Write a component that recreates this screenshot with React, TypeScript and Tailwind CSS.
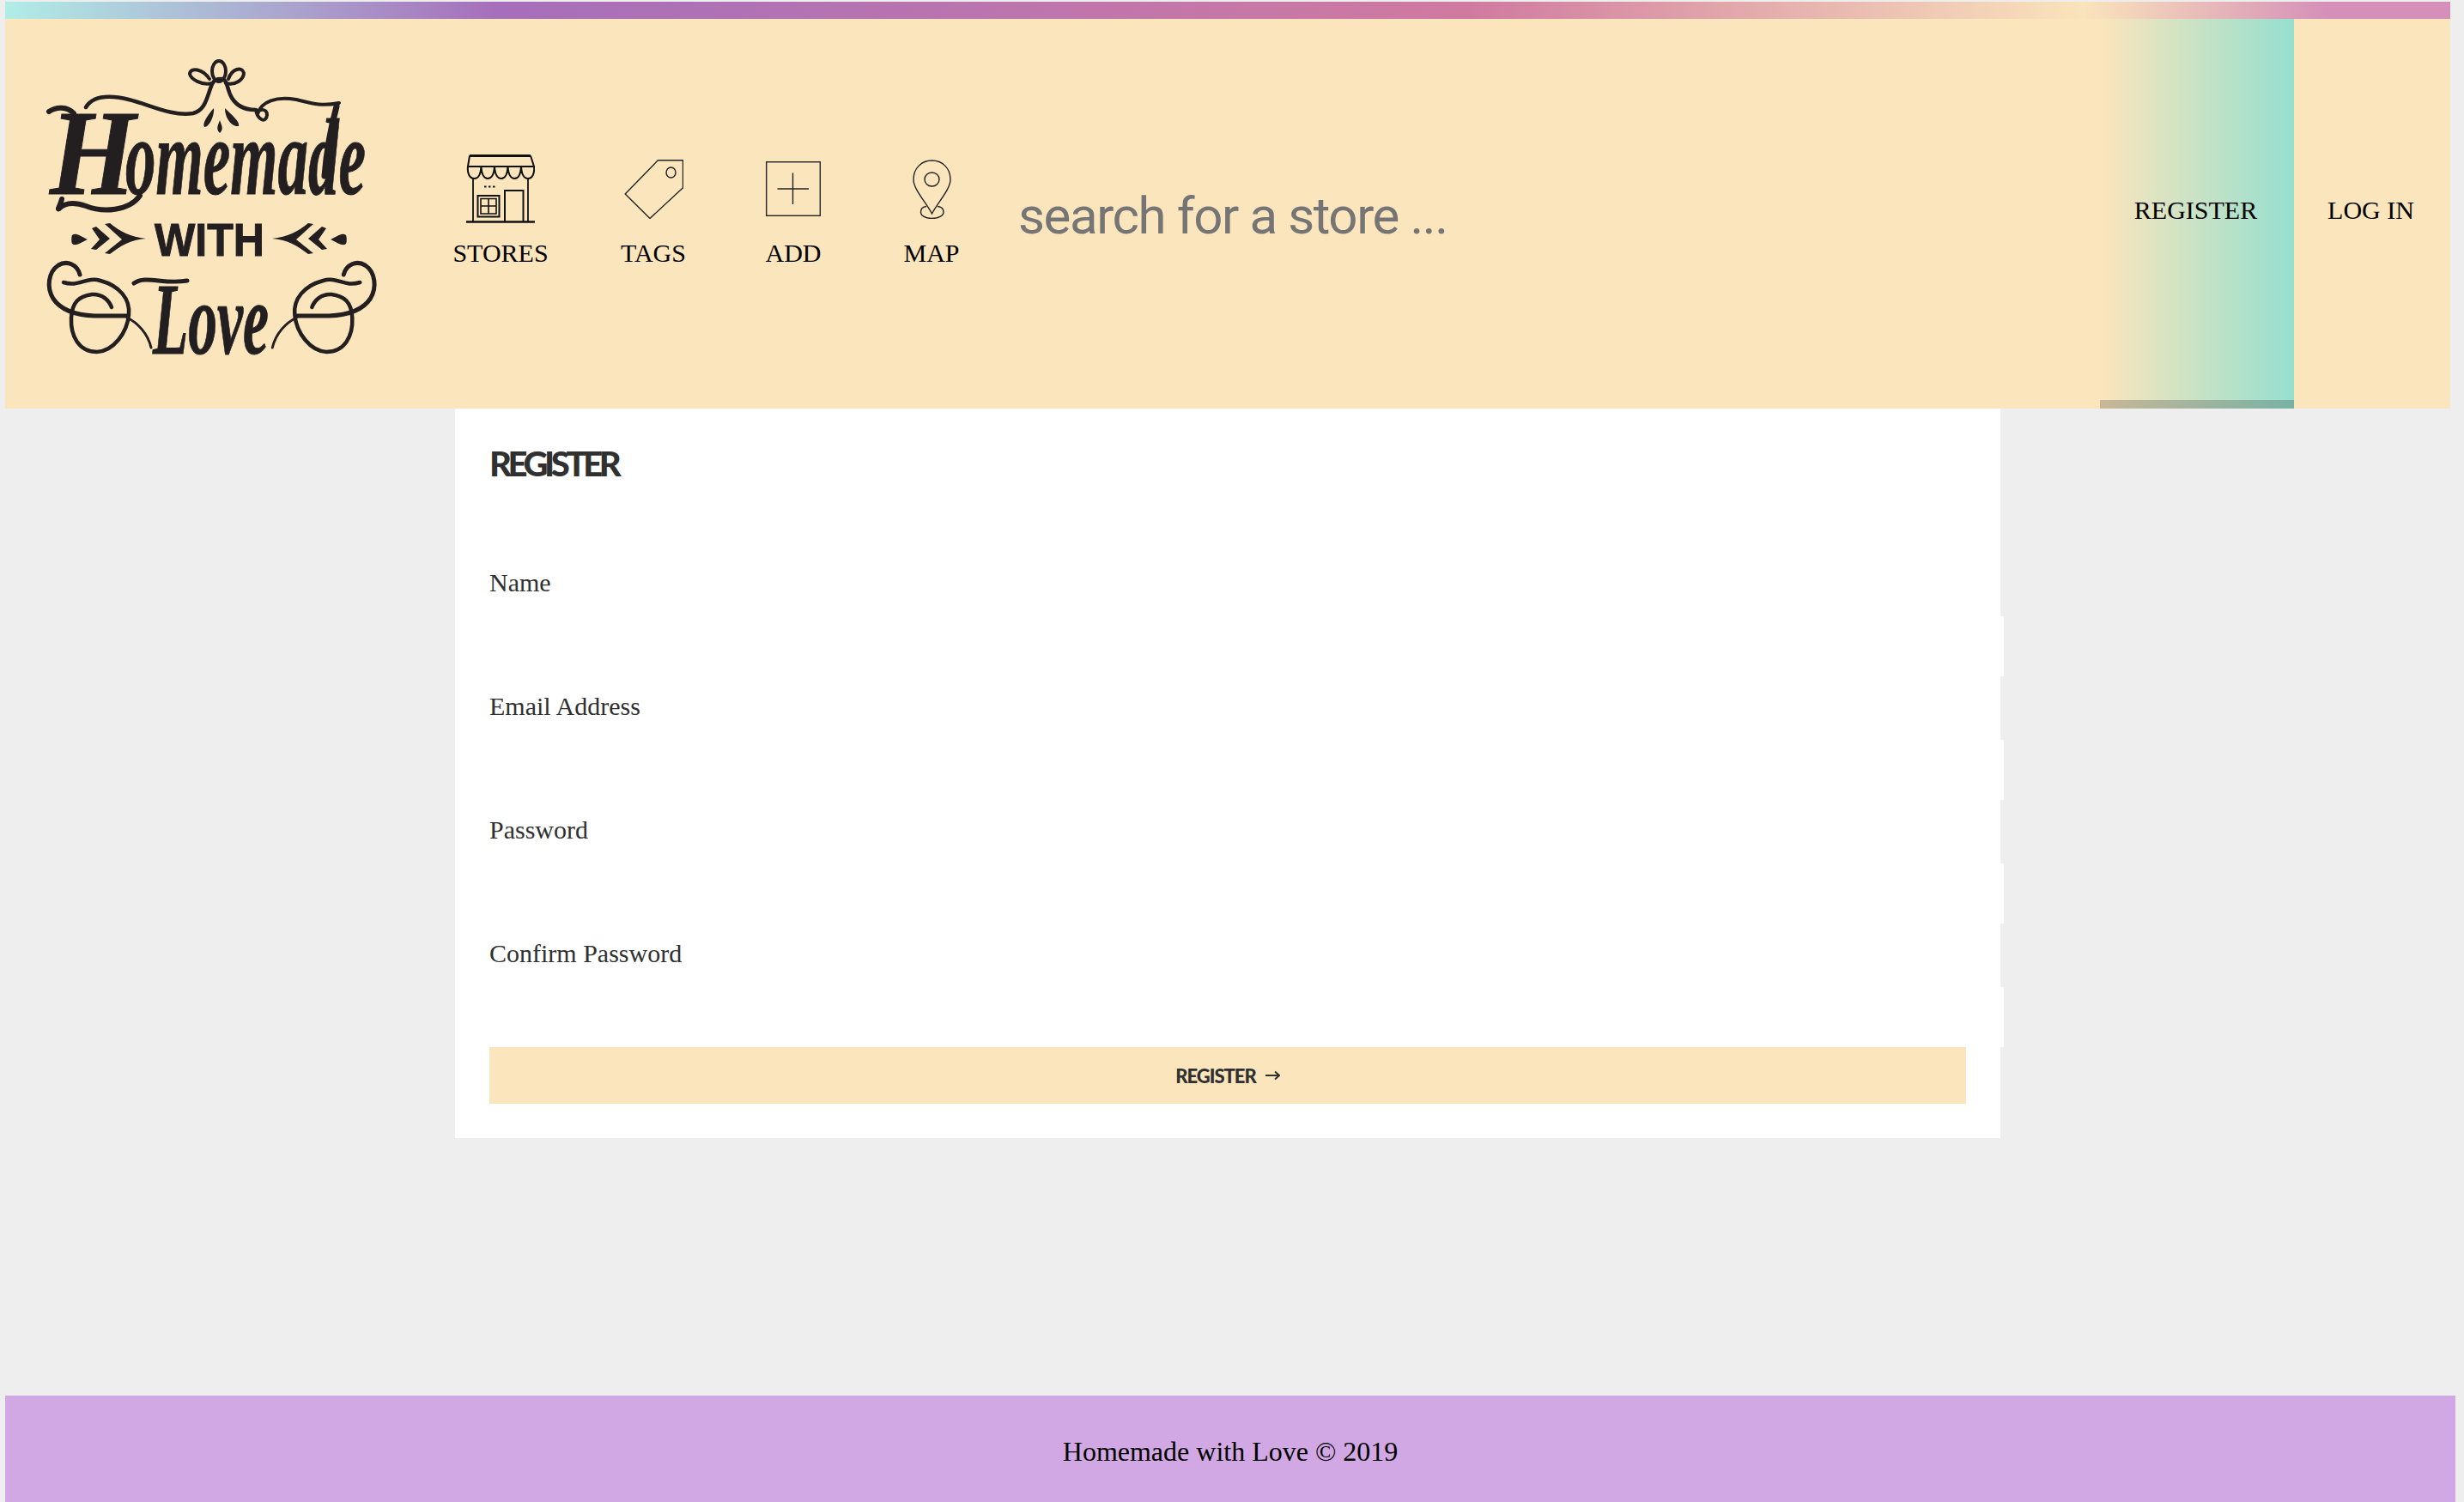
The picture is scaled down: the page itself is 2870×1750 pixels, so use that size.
const ink = '#231f20';

const Ornament = () => (
  <g fill="none" stroke={ink} strokeLinecap="round">
    <path strokeWidth="5" d="M93 320 C90 308 78 303 68 309 C56 317 54 335 62 348 C70 360 85 367 110 368 L148 368" />
    <path strokeWidth="4.5" d="M74 329 C92 335 100 322 117 327 C139 333 152 348 150 367 C148 388 132 409 113 410 C92 410 82 392 83 370 C84 352 92 345 107 343 C119 342 127 350 130 358" />
    <path strokeWidth="3" d="M148 370 C160 376 172 388 176 405" />
  </g>
);

const ArrowOrnament = () => (
  <g fill={ink}>
    <path d="M84 274 C88 271 92 274 102 279 C92 284 88 287 84 284 C83 282 83 276 84 274Z" />
    <path d="M107 266 L112 264 L128 278 L112 291 L106 290 L116 279Z" />
    <path d="M122 261 L128 260 C140 270 152 276 170 278 C152 279 140 287 128 296 L122 295 C132 287 138 282 142 279 C136 274 130 268 122 261Z" />
  </g>
);

const Logo = () => (
  <svg viewBox="6 22 484 454" className="w-[484px] h-[454px] shrink-0">
    {/* top flourish */}
    <g fill="none" stroke={ink} strokeLinecap="round">
      <path strokeWidth="4.5" d="M100 125 C108 112 125 110 150 116 C175 122 200 136 225 132 C240 128 241 112 247 98 C250 92 254 92 258 92 C264 92 264 100 268 110 C274 124 285 128 298 128" />
      <path strokeWidth="4" d="M298 128 C300 140 310 144 311 134 C311 126 301 126 300 133 C304 118 322 112 345 116 C365 121 375 124 395 120" />
      <ellipse strokeWidth="4" cx="255" cy="83" rx="8" ry="12" />
      <path strokeWidth="4" d="M247 97 C235 100 222 92 221 86 C222 78 236 80 244 92" />
      <path strokeWidth="4" d="M263 97 C275 100 284 92 284 85 C282 77 270 80 266 92" />
    </g>
    <g fill={ink}>
      <path d="M249 126 C250 134 244 148 238 148 C235 144 242 134 249 126Z" />
      <path d="M262 126 C270 134 280 142 278 147 C270 148 262 138 262 126Z" />
      <path d="M256 140 C258 146 261 150 256 155 C251 150 254 146 256 140Z" />
    </g>

    {/* lettering */}
    <text x="58" y="226" textLength="100" lengthAdjust="spacingAndGlyphs" fontFamily="Liberation Serif" fontStyle="italic" fontWeight="700" fontSize="142" fill={ink} stroke={ink} strokeWidth="1">H</text>
    <text x="146" y="226" textLength="280" lengthAdjust="spacingAndGlyphs" fontFamily="Liberation Serif" fontStyle="italic" fontWeight="700" fontSize="128" fill={ink} stroke={ink} strokeWidth="1">omemade</text>
    <g fill="none" stroke={ink} strokeLinecap="round">
      <path strokeWidth="6" d="M57 130 C66 124 78 124 86 132" />
      <path strokeWidth="6" d="M72 232 C70 240 66 245 69 243 C76 236 88 236 100 240 C120 248 150 246 163 228" />
      <path strokeWidth="7" d="M392 124 C385 150 380 180 378 205" />
    </g>

    <text x="180" y="298" textLength="128" lengthAdjust="spacingAndGlyphs" fontFamily="Liberation Sans" fontWeight="700" fontSize="54" fill={ink} stroke={ink} strokeWidth="1">WITH</text>
    <ArrowOrnament />
    <g transform="translate(487 0) scale(-1 1)"><ArrowOrnament /></g>

    <text x="178" y="412" textLength="135" lengthAdjust="spacingAndGlyphs" fontFamily="Liberation Serif" fontStyle="italic" fontWeight="700" fontSize="118" fill={ink} stroke={ink} strokeWidth="1">Love</text>
    <path fill="none" stroke={ink} strokeWidth="5" strokeLinecap="round" d="M156 330 C170 320 190 332 218 327" />
    <Ornament />
    <g transform="translate(493.3 0) scale(-1 1)"><Ornament /></g>
  </svg>
);

const StoreIcon = () => (
  <svg viewBox="0 0 80 80" className="w-[80px] h-[80px]" fill="none" stroke="#111" strokeWidth="1.6">
    <path strokeWidth="3" d="M4 1.5 L75 1.5" />
    <path strokeWidth="2" d="M4 1.5 L2 14 L79 14 L75 1.5" />
    <path strokeWidth="2" d="M2 14 C1 22 4 28 9.5 28 C15 28 17 22 17.4 14 C18 22 20 28 25 28 C30 28 32.5 22 33 14 C33.5 22 36 28 41 28 C46 28 48 22 48.5 14 C49 22 51 28 56.5 28 C62 28 63.5 22 64 14 C64.5 22 67 28 72 28 C77 28 80 22 79 14" />
    <path strokeWidth="1.8" d="M8 27 L8 78 M72 27 L72 78" />
    <path strokeWidth="2.5" d="M0 78.5 L80 78.5" />
    <rect x="13.5" y="48" width="25" height="24.5" strokeWidth="2" />
    <path strokeWidth="1.6" d="M17 51.5 H35 V69 H17Z M26 51.5 V69 M17 60 H35" />
    <path strokeWidth="2" d="M45 78 V42 H66.5 V78" />
    <path strokeWidth="2" strokeDasharray="2.5 2.5" d="M21 37.5 H34" />
  </svg>
);

const TagIcon = () => (
  <svg viewBox="0 0 69 69" className="w-[69px] h-[69px]" fill="none" stroke="#222" strokeWidth="1.4">
    <path strokeLinejoin="round" d="M39.3 0.8 H68.5 V32.7 L30 68.5 L1.2 40Z" />
    <ellipse cx="54.5" cy="15" rx="5.5" ry="6" />
  </svg>
);

const AddIcon = () => (
  <svg viewBox="0 0 64 64" className="w-[64px] h-[64px]" fill="none" stroke="#222" strokeWidth="1.4">
    <rect x="0.7" y="0.7" width="62.6" height="62.6" />
    <path d="M31.5 13.5 V50 M13.5 32 H50" />
  </svg>
);

const MapIcon = () => (
  <svg viewBox="0 0 45 69" className="w-[45px] h-[69px]" fill="none" stroke="#222" strokeWidth="1.4">
    <path d="M22.5 63 C16 50 1 35 1 23 C1 10 10.5 1 22.5 1 C34.5 1 44 10 44 23 C44 35 29 50 22.5 63Z" />
    <ellipse cx="22.5" cy="23" rx="8.5" ry="8" />
    <path d="M16 54.5 C11 55 9.5 58 9.5 61 C9.5 65.5 15 68.5 22.5 68.5 C30 68.5 36 65.5 36 61 C36 58 34 55 29 54.5" />
  </svg>
);

const NavItem = ({ label, icon, className }: { label: string; icon: React.ReactNode; className: string }) => (
  <a href="#" className={`flex flex-col items-center pt-[158px] ${className}`}>
    <div className="h-[80px] flex items-center justify-center">{icon}</div>
    <span className="mt-[18px] text-[30px] leading-[34px] text-black">{label}</span>
  </a>
);

const Field = ({ label, type }: { label: string; type: string }) => (
  <div>
    <label className="block h-[74px] text-[30px] leading-[70px] text-[#303030]">{label}</label>
    <input type={type} aria-label={label} className="block w-[1764px] h-[70px] bg-white outline-none" />
  </div>
);

export default function App() {
  return (
    <div className="min-h-[1750px] flex flex-col bg-[#eeeeee] pt-[2px] pl-[6px] font-['Liberation_Serif',serif]">
      <div className="w-[2848px] h-[20px] bg-[linear-gradient(90deg,#b0ede6_0%,#a66fbb_20%,#d07aa0_60%,#fae4bb_85%,#d58fb8_95%)]"></div>

      <header className="w-[2848px] h-[454px] flex bg-[#fbe5bc]">
        <Logo />
        <nav className="flex">
          <NavItem label="STORES" icon={<StoreIcon />} className="w-[186px]" />
          <NavItem label="TAGS" icon={<TagIcon />} className="w-[170px]" />
          <NavItem label="ADD" icon={<AddIcon />} className="w-[156px]" />
          <NavItem label="MAP" icon={<MapIcon />} className="w-[166px]" />
        </nav>
        <input
          placeholder="search for a store ..."
          className="flex-1 min-w-0 pl-[18px] pt-[6px] bg-transparent outline-none font-['Roboto',sans-serif] text-[60px] tracking-[-1.4px] placeholder:text-[#757575]"
        />
        <a href="#" className="w-[226px] flex flex-col bg-[linear-gradient(90deg,#fbe5bc_0%,#96dfcf_100%)]">
          <span className="flex-1 flex items-center justify-center pr-[3px] text-[30px] text-black">REGISTER</span>
          <span className="h-[10px] bg-black/20"></span>
        </a>
        <a href="#" className="w-[182px] pb-[10px] pr-[3px] flex items-center justify-center text-[30px] text-black">LOG IN</a>
      </header>

      <main className="flex-1">
        <form className="ml-[524px] w-[1800px] bg-white px-[40px] pb-[40px]">
          <h2 className="h-[168px] font-['Lato',sans-serif] font-black text-[40px] leading-[128px] tracking-[-4.4px] text-[#303030]">REGISTER</h2>
          <Field label="Name" type="text" />
          <Field label="Email Address" type="email" />
          <Field label="Password" type="password" />
          <Field label="Confirm Password" type="password" />
          <button type="button" className="w-full h-[66px] flex items-center justify-center gap-[11px] bg-[#fbe5bc] font-['Lato',sans-serif] font-black text-[22px] tracking-[-1px] text-[#303030]">
            REGISTER
            <svg viewBox="0 0 17 12" className="w-[17px] h-[12px]" fill="none" stroke="#303030" strokeWidth="2">
              <path d="M0 6 H15 M11 1.5 L16 6 L11 10.5" />
            </svg>
          </button>
        </form>
      </main>

      <footer className="w-[2854px] h-[124px] pt-[6px] flex items-center justify-center bg-[#d2a8e4] text-[32px] text-black">
        Homemade with Love © 2019
      </footer>
    </div>
  );
}
